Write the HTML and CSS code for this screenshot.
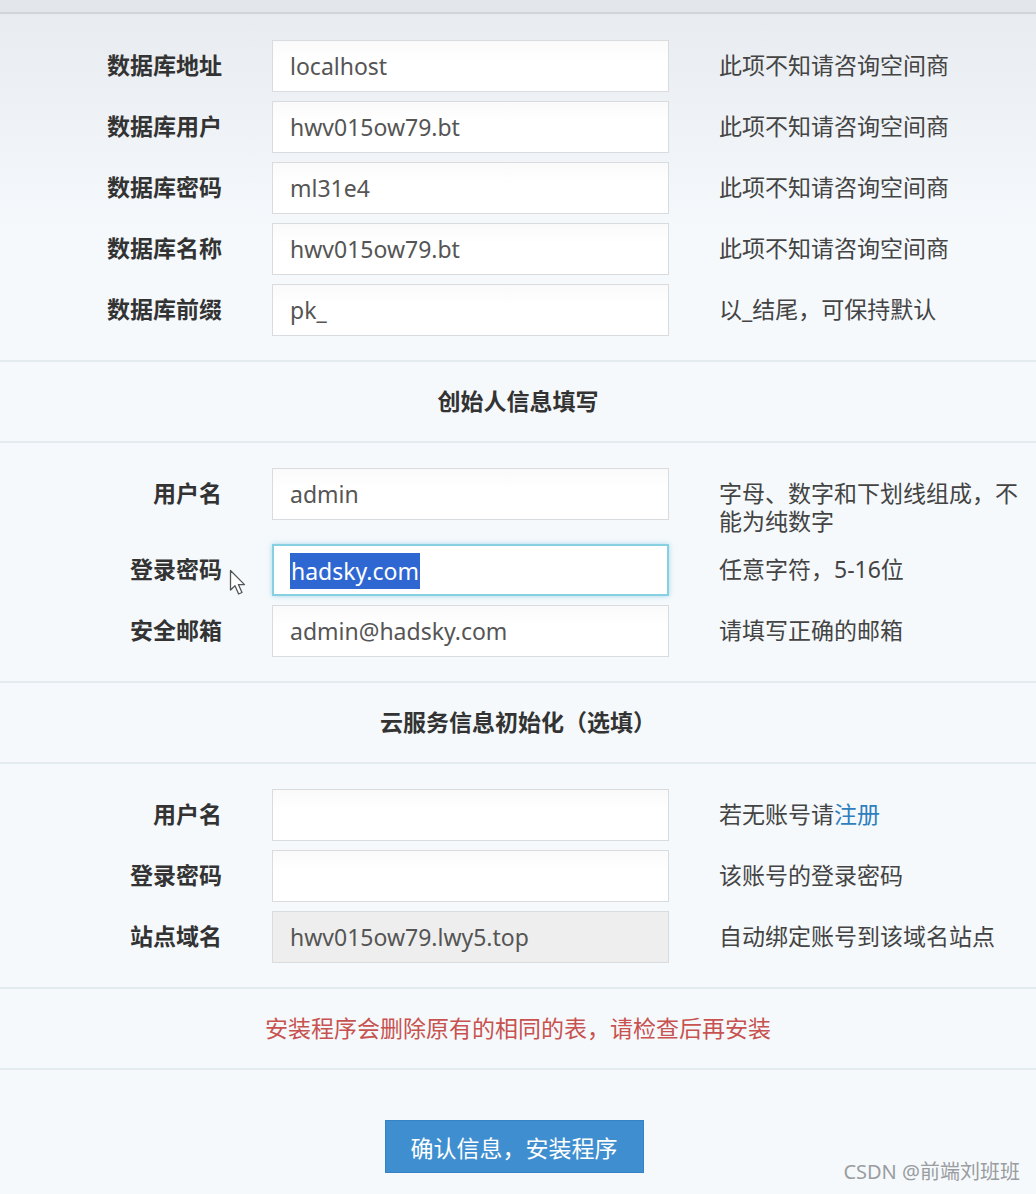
FILE: index.html
```html
<!DOCTYPE html>
<html>
<head>
    <meta charset="UTF-8">
    <title>安装程序</title>
    <link rel="stylesheet" href="styles.css">
</head>
<body>
    <div class="topbar"></div>
    <div class="install-page">
        <div class="form-section first">
            <div class="form-row">
                <div class="form-label">数据库地址</div>
                <input class="form-input" type="text" value="localhost">
                <div class="form-hint">此项不知请咨询空间商</div>
            </div>
            <div class="form-row">
                <div class="form-label">数据库用户</div>
                <input class="form-input" type="text" value="hwv015ow79.bt">
                <div class="form-hint">此项不知请咨询空间商</div>
            </div>
            <div class="form-row">
                <div class="form-label">数据库密码</div>
                <input class="form-input" type="text" value="ml31e4">
                <div class="form-hint">此项不知请咨询空间商</div>
            </div>
            <div class="form-row">
                <div class="form-label">数据库名称</div>
                <input class="form-input" type="text" value="hwv015ow79.bt">
                <div class="form-hint">此项不知请咨询空间商</div>
            </div>
            <div class="form-row">
                <div class="form-label">数据库前缀</div>
                <input class="form-input" type="text" value="pk_">
                <div class="form-hint">以_结尾，可保持默认</div>
            </div>
        </div>

        <div class="section-title">创始人信息填写</div>

        <div class="form-section">
            <div class="form-row">
                <div class="form-label">用户名</div>
                <input class="form-input" type="text" value="admin">
                <div class="form-hint">字母、数字和下划线组成，不能为纯数字</div>
            </div>
            <div class="form-row">
                <div class="form-label">登录密码</div>
                <div class="form-input focus"><span class="selected">hadsky.com</span></div>
                <div class="form-hint">任意字符，5-16位</div>
                <svg class="mouse-cursor" width="20" height="28" viewBox="0 0 20 28">
                    <path d="M1.5 1.5 L1.5 21 L6 16.8 L9.6 25 L13 23.5 L9.4 15.6 L15.5 15.6 Z" fill="#ffffff" stroke="#555555" stroke-width="1.3" stroke-linejoin="round"/>
                </svg>
            </div>
            <div class="form-row">
                <div class="form-label">安全邮箱</div>
                <input class="form-input" type="text" value="admin@hadsky.com">
                <div class="form-hint">请填写正确的邮箱</div>
            </div>
        </div>

        <div class="section-title">云服务信息初始化（选填）</div>

        <div class="form-section">
            <div class="form-row">
                <div class="form-label">用户名</div>
                <input class="form-input" type="text" value="">
                <div class="form-hint">若无账号请<a class="hint-link" href="#">注册</a></div>
            </div>
            <div class="form-row">
                <div class="form-label">登录密码</div>
                <input class="form-input" type="password" value="">
                <div class="form-hint">该账号的登录密码</div>
            </div>
            <div class="form-row">
                <div class="form-label">站点域名</div>
                <input class="form-input" type="text" value="hwv015ow79.lwy5.top" disabled>
                <div class="form-hint">自动绑定账号到该域名站点</div>
            </div>
        </div>

        <div class="warning">安装程序会删除原有的相同的表，请检查后再安装</div>

        <div class="submit-box">
            <button class="submit-btn" type="button">确认信息，安装程序</button>
        </div>
    </div>
    <div class="watermark">CSDN @前端刘班班</div>
</body>
</html>
```

FILE: styles.css
```css
*{
    margin: 0;
    padding: 0;
    box-sizing: border-box;
    font-family: "Noto Sans", "Noto Sans CJK SC", sans-serif;
}
html,body{
    width: 100%;
    height: 100%;
}
body{
    position: relative;
    background-color: #f5f9fc;
    color: #333333;
    font-size: 23px;
    overflow: hidden;
}
.topbar{
    height: 14px;
    background-color: #e3e6ea;
    border-bottom: 2px solid #cfd4d8;
}
.install-page{
    background: linear-gradient(#e8ebef 0, #f5f9fc 220px);
}
.form-section{
    display: flex;
    flex-direction: column;
    gap: 9px;
    padding: 25px 0 24px;
    border-bottom: 2px solid #e3ebef;
}
.form-section.first{
    padding-top: 26px;
}
.form-row{
    position: relative;
    display: grid;
    grid-template-columns: 222px 397px 310px;
    column-gap: 50px;
    align-items: start;
}
.form-label{
    text-align: right;
    font-weight: 700;
    color: #333333;
    padding-top: 11px;
    line-height: 28px;
    white-space: nowrap;
}
.form-input{
    height: 52px;
    padding: 0 17px;
    background: linear-gradient(#fafafa, #ffffff 40%);
    border: 1px solid #d9dcde;
    font-size: 23px;
    color: #555555;
    line-height: 50px;
    outline: none;
}
.form-input:disabled{
    background: #eeeeee;
    color: #555555;
}
.form-input.focus{
    border: 2px solid #86d0e2;
    box-shadow: 0 0 5px rgba(102, 190, 225, 0.55);
    padding: 0 16px;
    background: #ffffff;
}
.selected{
    background-color: #2f67d2;
    color: #ffffff;
    padding: 2px 1px;
}
.form-hint{
    padding-top: 11px;
    line-height: 28px;
    color: #444444;
}
.hint-link{
    color: #2f7fbf;
    text-decoration: none;
}
.mouse-cursor{
    position: absolute;
    left: 229px;
    top: 25px;
}
.section-title{
    height: 81px;
    line-height: 79px;
    text-align: center;
    font-weight: 700;
    color: #333333;
    border-bottom: 2px solid #e3ebef;
}
.warning{
    height: 81px;
    line-height: 79px;
    text-align: center;
    color: #c8524f;
    border-bottom: 2px solid #e3ebef;
}
.submit-box{
    display: flex;
    justify-content: center;
    padding-top: 50px;
    padding-right: 8px;
}
.submit-btn{
    width: 259px;
    height: 53px;
    background-color: #3f8fd0;
    border: 1px solid #3583c4;
    color: #ffffff;
    font-size: 23px;
}
.watermark{
    position: absolute;
    right: 16px;
    bottom: 8px;
    font-size: 20px;
    line-height: 28px;
    color: #9a9da0;
}
```
